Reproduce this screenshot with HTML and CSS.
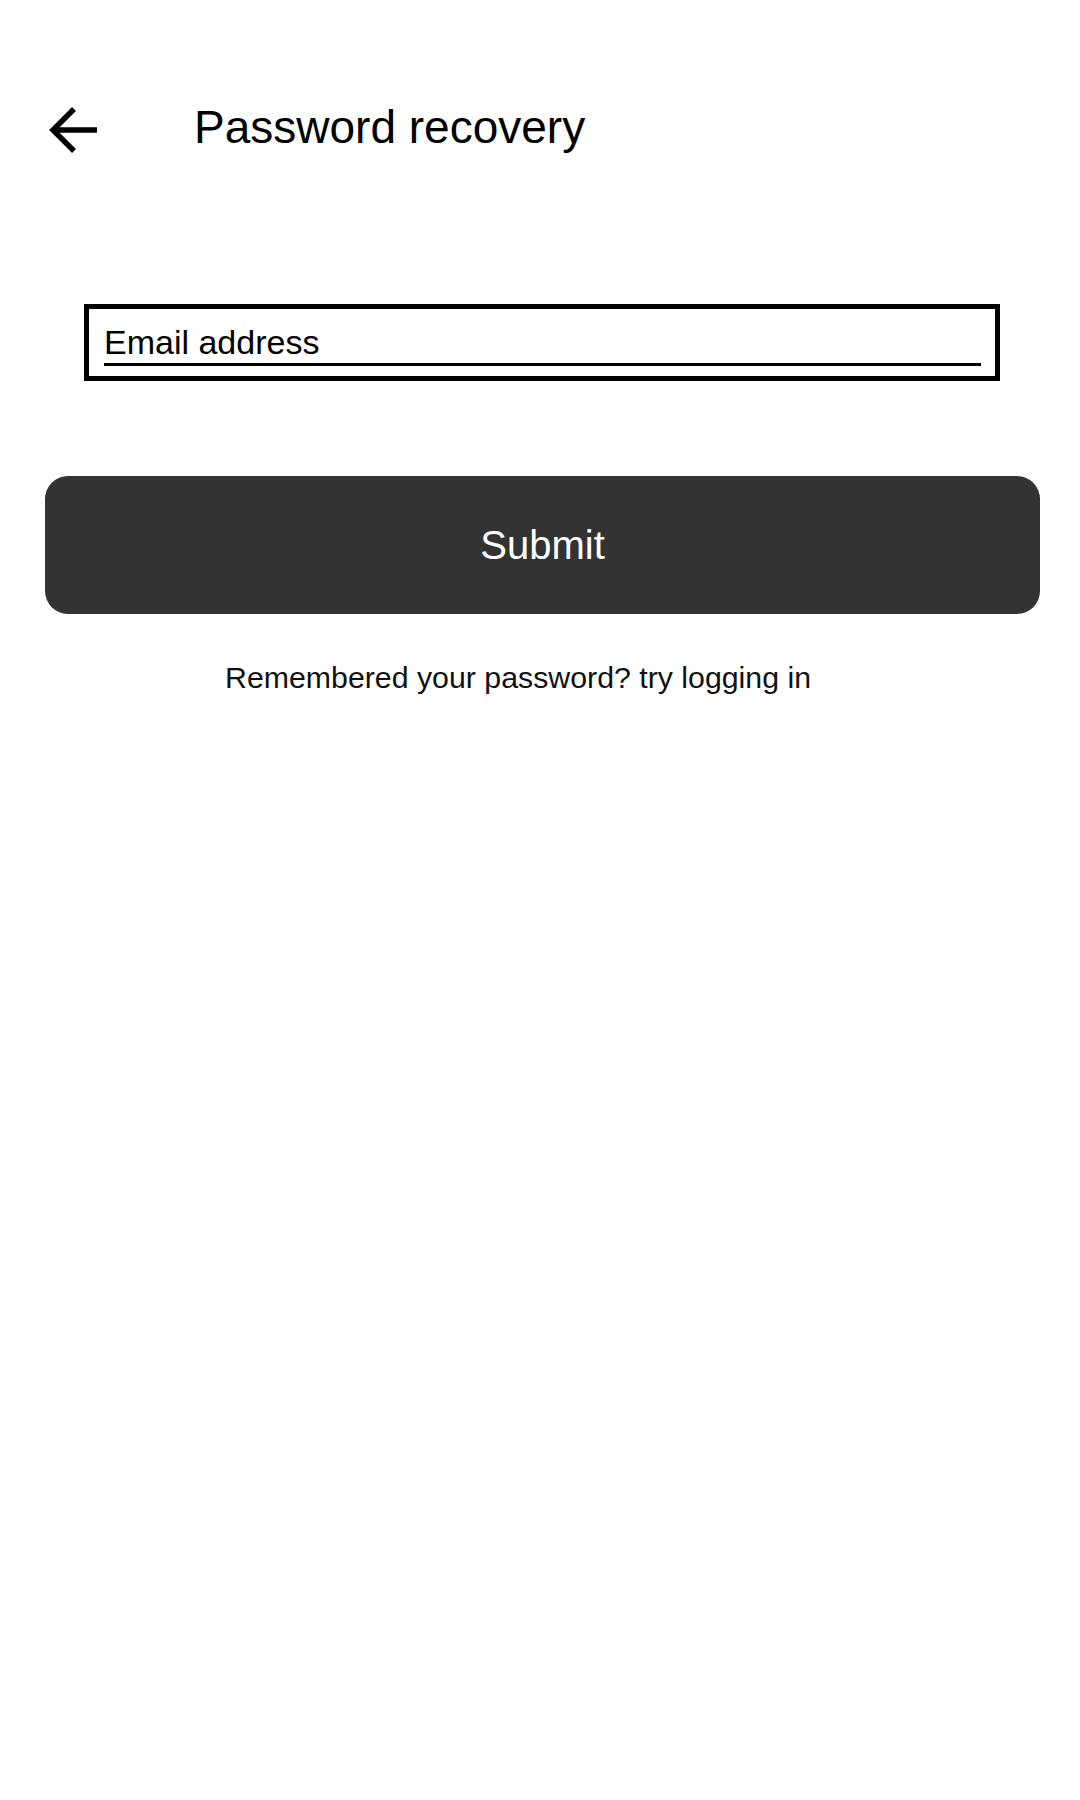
FILE: index.html
```html
<!DOCTYPE html>
<html lang="en">
<head>
<meta charset="utf-8">
<title>Password recovery</title>
<link rel="stylesheet" href="styles.css">
</head>
<body>
<div class="screen">
  <header class="header">
    <button class="back" aria-label="Back">
      <svg width="50" height="50" viewBox="0 0 50 50" fill="none" stroke="#000" stroke-width="5.5" stroke-linecap="butt" stroke-linejoin="miter">
        <path d="M48 25 H5"/>
        <path d="M25 4 L4 25 L25 46"/>
      </svg>
    </button>
    <h1 class="title">Password recovery</h1>
  </header>

  <form class="form">
    <div class="field">
      <div class="field-line">Email address</div>
    </div>
    <button type="button" class="submit">Submit</button>
    <p class="hint">Remembered your password? try logging in</p>
  </form>
</div>
</body>
</html>
```

FILE: styles.css
```css
html, body {
  margin: 0;
  padding: 0;
  background: #ffffff;
}

body {
  font-family: "Liberation Sans", Arial, sans-serif;
  color: #000;
  width: 1080px;
  height: 1800px;
}

.screen {
  display: flex;
  flex-direction: column;
}

.header {
  display: flex;
  align-items: center;
  padding-top: 101px;
  padding-left: 49px;
  height: 53px;
}

.back {
  display: flex;
  align-items: center;
  justify-content: center;
  border: 0;
  background: none;
  padding: 0;
  margin-top: 4px;
  width: 50px;
  height: 50px;
}

.back svg {
  display: block;
}

.title {
  margin: 0 0 0 95px;
  font-size: 46px;
  line-height: 53px;
  font-weight: 400;
}

.form {
  display: flex;
  flex-direction: column;
  margin: 150px 40px 0 45px;
}

.field {
  margin: 0 40px 0 39px;
  border: 5px solid #000;
  padding: 14px 14px 10px 15px;
  box-sizing: border-box;
  height: 77px;
}

.field-line {
  font-size: 34px;
  line-height: 39px;
  border-bottom: 3px solid #000;
  box-sizing: border-box;
  height: 43px;
}

.submit {
  margin-top: 95px;
  height: 138px;
  border: 0;
  border-radius: 23px;
  background: #333333;
  color: #ffffff;
  font-family: "Liberation Sans", Arial, sans-serif;
  font-size: 40px;
  display: flex;
  align-items: center;
  justify-content: center;
}

.hint {
  margin: 47px 0 0 0;
  font-size: 30.3px;
  line-height: 34.5px;
  padding-left: 180px;
  color: #111;
}
```
